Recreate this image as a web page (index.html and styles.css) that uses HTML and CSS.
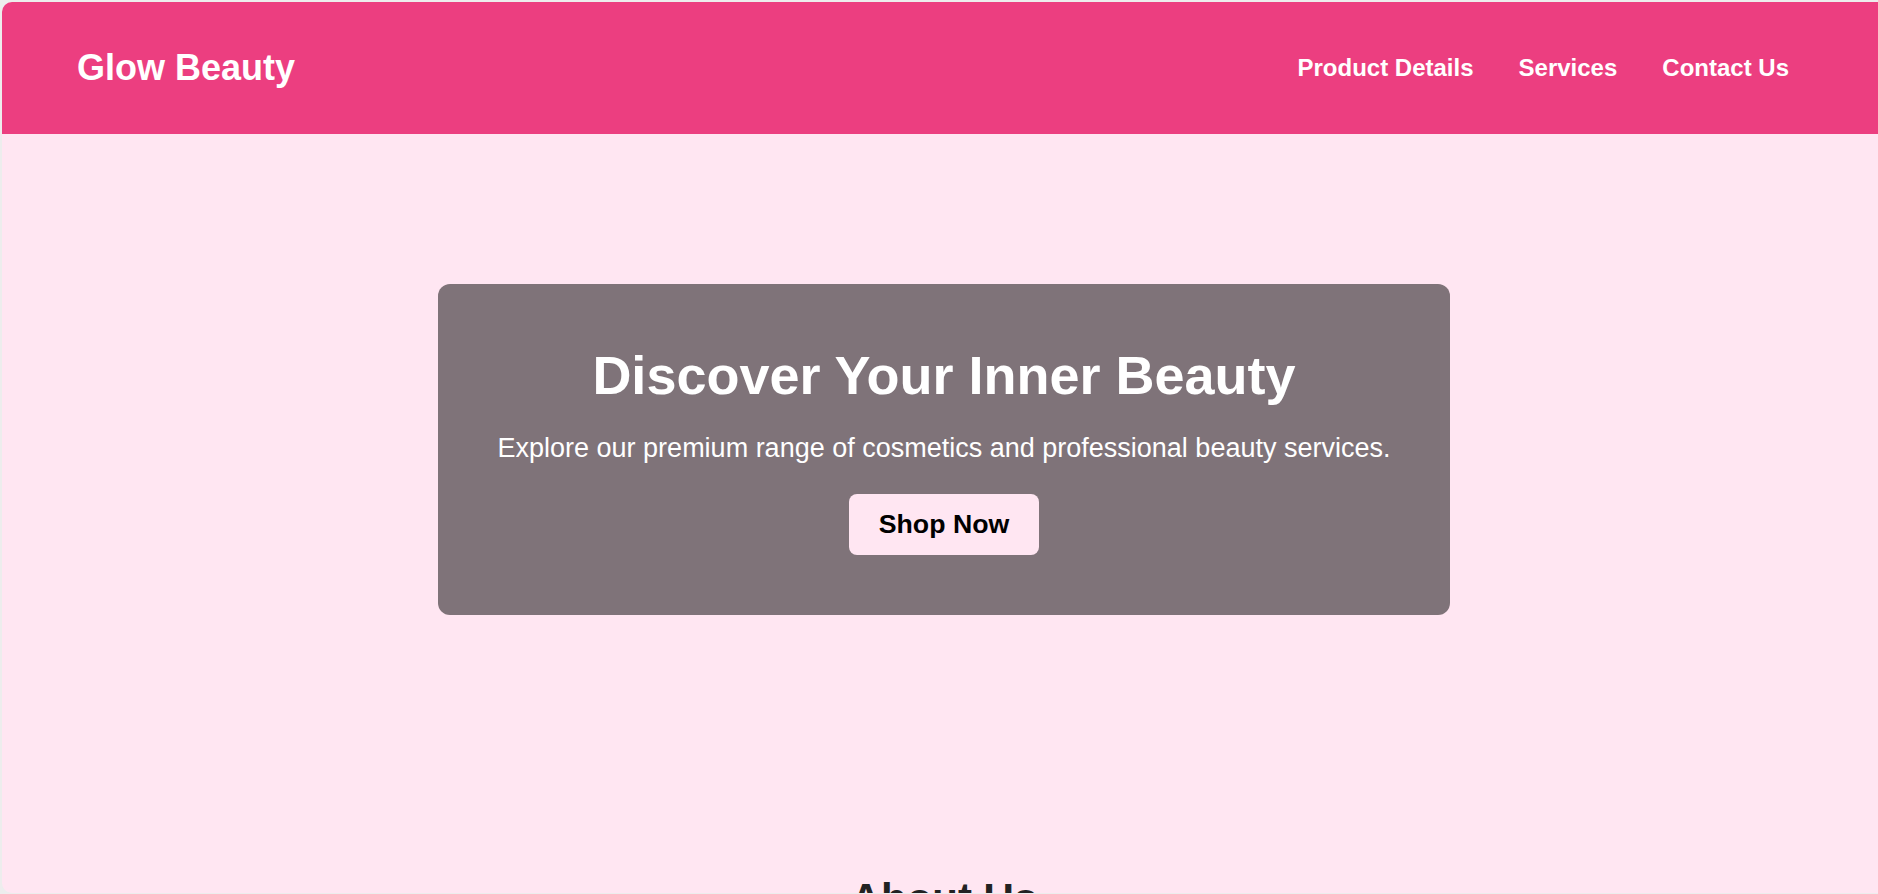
FILE: index.html
```html
<!DOCTYPE html>
<html lang="en">
<head>
<meta charset="utf-8">
<title>Glow Beauty</title>
<link rel="stylesheet" href="styles.css">
</head>
<body>
<div class="frame">
  <header class="site-header">
    <div class="logo">Glow Beauty</div>
    <nav class="nav">
      <a href="#products" class="nav-link">Product Details</a>
      <a href="#services" class="nav-link">Services</a>
      <a href="#contact" class="nav-link">Contact Us</a>
    </nav>
  </header>
  <section class="hero">
    <div class="hero-box">
      <h1 class="hero-title">Discover Your Inner Beauty</h1>
      <p class="hero-text">Explore our premium range of cosmetics and professional beauty services.</p>
      <div class="hero-actions">
        <a href="#products" class="btn">Shop Now</a>
      </div>
    </div>
  </section>
  <section class="about">
    <h2 class="about-title">About Us</h2>
  </section>
</div>
</body>
</html>
```
FILE: styles.css
```css
html, body {
  margin: 0;
  padding: 0;
  height: 100%;
  overflow: hidden;
  background: #ededed;
}

.frame {
  margin: 2px 0 0 2px;
  width: 1884px;
  height: 891px;
  border-radius: 10px 0 0 10px;
  overflow: hidden;
  background: #ffe6f2;
  font-family: "Liberation Sans", Arial, sans-serif;
}

.site-header {
  height: 132px;
  background: #ec3e80;
  display: flex;
  align-items: center;
  justify-content: space-between;
  padding: 0 97px 0 75px;
  box-sizing: border-box;
}

.logo {
  color: #fff;
  font-size: 36px;
  font-weight: bold;
}

.nav {
  display: flex;
  gap: 45px;
}

.nav-link {
  color: #fff;
  font-size: 24px;
  font-weight: bold;
  text-decoration: none;
}

.hero {
  padding: 150px 0;
}

.hero-box {
  max-width: 1012px;
  margin: 0 auto;
  box-sizing: border-box;
  padding: 60px 20px;
  background: rgba(0, 0, 0, 0.5);
  border-radius: 12px;
  text-align: center;
  color: #fff;
}

.hero-title {
  margin: 0 0 27px;
  font-size: 54px;
  font-weight: bold;
  line-height: normal;
}

.hero-text {
  margin: 0 0 30px;
  font-size: 27px;
  line-height: normal;
}

.hero-actions {
  display: flex;
  justify-content: center;
}

.btn {
  display: block;
  padding: 15px 30px;
  background: #ffe6f2;
  color: #000;
  font-size: 26.7px;
  font-weight: bold;
  text-decoration: none;
  border-radius: 8px;
}

.about {
  padding-top: 110px;
  text-align: center;
}

.about-title {
  margin: 0;
  font-size: 42px;
  color: #222;
}
```
